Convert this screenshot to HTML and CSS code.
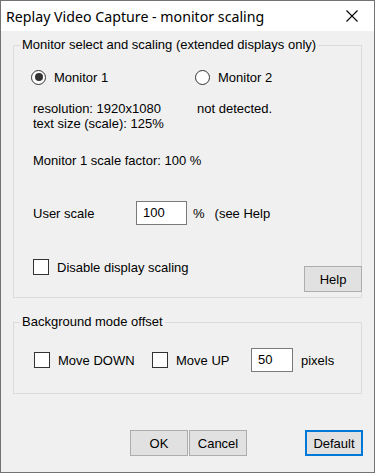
FILE: index.html
```html
<!DOCTYPE html>
<html lang="en">
<head>
    <meta charset="UTF-8">
    <title>Replay Video Capture - monitor scaling</title>
    <link rel="stylesheet" href="styles.css">
</head>
<body>
    <div class="window">
        <div class="titlebar">
            <span class="title">Replay Video Capture - monitor scaling</span>
            <svg class="close" width="12" height="12" viewBox="0 0 12 12">
                <path d="M0.5 0.5 L11.5 11.5 M11.5 0.5 L0.5 11.5" stroke="#000" stroke-width="1.1" fill="none"/>
            </svg>
        </div>
        <div class="content">
            <fieldset class="group group-monitor">
                <legend>Monitor select and scaling (extended displays only)</legend>
                <div class="radios">
                    <label class="radio-item"><span class="radio checked"></span>Monitor 1</label>
                    <label class="radio-item"><span class="radio"></span>Monitor 2</label>
                </div>
                <div class="info">
                    <div class="info-col">
                        <div>resolution: 1920x1080</div>
                        <div>text size (scale): 125%</div>
                    </div>
                    <div class="info-col second">
                        <div>not detected.</div>
                    </div>
                </div>
                <div class="factor">Monitor 1 scale factor: 100 %</div>
                <div class="user-scale">
                    <span class="us-label">User scale</span>
                    <span class="field field-scale">100</span>
                    <span class="pct">%</span>
                    <span>(see Help</span>
                </div>
                <div class="bottom-row">
                    <label class="check-item"><span class="check"></span>Disable display scaling</label>
                    <button class="btn btn-help">Help</button>
                </div>
            </fieldset>
            <fieldset class="group group-offset">
                <legend>Background mode offset</legend>
                <div class="offset-row">
                    <label class="check-item down"><span class="check"></span>Move DOWN</label>
                    <label class="check-item up"><span class="check"></span>Move UP</label>
                    <span class="field field-px">50</span>
                    <span>pixels</span>
                </div>
            </fieldset>
            <div class="actions">
                <button class="btn">OK</button>
                <button class="btn">Cancel</button>
                <button class="btn btn-default">Default</button>
            </div>
        </div>
    </div>
</body>
</html>
```

FILE: styles.css
```css
body {
    margin: 0;
    font-family: "Liberation Sans", Arial, sans-serif;
    font-size: 13px;
    line-height: 15px;
    color: #000;
}

.window {
    width: 375px;
    height: 473px;
    box-sizing: border-box;
    border: 1px solid #737373;
    display: flex;
    flex-direction: column;
}

.titlebar {
    height: 30px;
    background: #fff;
    display: flex;
    align-items: center;
    justify-content: space-between;
    padding: 0 16px 0 5px;
    font-family: "Noto Sans", sans-serif;
    font-size: 14.2px;
}

.content {
    flex: 1;
    background: #f0f0f0;
    padding: 4px 12px 0 12px;
}

.group {
    margin: 0;
    border: 1px solid #dcdcdc;
    padding: 0;
    min-width: 0;
}

.group legend {
    padding: 0 2px;
    margin-left: 6px;
    line-height: 20px;
}

.radios {
    display: flex;
    margin-top: 12px;
    padding-left: 17px;
    height: 20px;
    align-items: center;
}

.radio-item {
    display: flex;
    align-items: center;
    width: 164px;
}

.radio {
    width: 13px;
    height: 13px;
    border: 1px solid #333;
    border-radius: 50%;
    background: #fff;
    margin-right: 8px;
    display: flex;
    align-items: center;
    justify-content: center;
}

.radio.checked::after {
    content: "";
    width: 8px;
    height: 8px;
    border-radius: 50%;
    background: #333;
}

.info {
    display: flex;
    margin-top: 14px;
    padding-left: 19px;
}

.info-col {
    width: 170px;
}

.factor {
    margin-top: 22px;
    padding-left: 19px;
}

.user-scale {
    display: flex;
    align-items: center;
    margin-top: 33px;
    padding-left: 19px;
}

.us-label {
    width: 103px;
}

.field {
    box-sizing: border-box;
    height: 24px;
    background: #fff;
    border: 1px solid #7a7a7a;
    padding: 3px 0 0 6px;
}

.field-scale {
    width: 51px;
}

.pct {
    margin: 0 10px 0 6px;
}

.bottom-row {
    display: flex;
    justify-content: space-between;
    align-items: flex-start;
    margin-top: 34px;
    padding: 0 0 5px 19px;
    margin-right: -1px;
}

.check-item {
    display: flex;
    align-items: center;
}

.check {
    width: 14px;
    height: 14px;
    border: 1px solid #333;
    background: #fff;
    margin-right: 8px;
}

.btn {
    font-family: inherit;
    font-size: 13px;
    width: 58px;
    height: 26px;
    padding: 0;
    background: #e1e1e1;
    border: 1px solid #adadad;
    color: #000;
}

.btn-help {
    margin-top: 7px;
}

.group-offset {
    margin-top: 14px;
}

.offset-row {
    display: flex;
    align-items: center;
    margin-top: 16px;
    padding: 0 0 21px 20px;
}

.check-item.down {
    width: 118px;
}

.check-item.up {
    width: 99px;
}

.field-px {
    width: 42px;
    margin-right: 8px;
}

.actions {
    display: flex;
    gap: 1px;
    margin-top: 36px;
    padding-left: 117px;
}

.btn-default {
    margin-left: auto;
    margin-right: -1px;
    border: 2px solid #0078d7;
}
```
